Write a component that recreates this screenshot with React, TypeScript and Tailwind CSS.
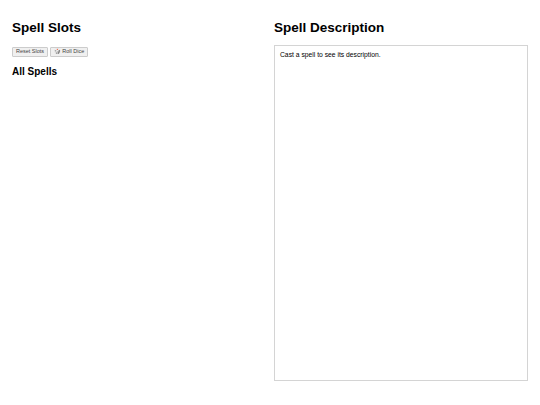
export default function App() {
  return (
    <div className="flex w-[540px] h-[405px] gap-[24px] bg-white p-3 text-black font-['Liberation_Sans',Arial,sans-serif]">
      <div className="w-[238px]">
        <h1 className="text-[13.5px] leading-[16px] font-bold mt-[8px]">Spell Slots</h1>
        <div className="mt-[11px] flex gap-[2px]">
          <button className="h-[10px] w-[36px] border border-[#ccc] bg-[#f0f0f0] rounded-[1px] text-[5.5px] leading-none text-[#444]">Reset Slots</button>
          <button className="h-[10px] w-[38px] border border-[#ccc] bg-[#f0f0f0] rounded-[1px] text-[5.5px] leading-none text-[#444]">🎲 Roll Dice</button>
        </div>
        <h2 className="text-[10px] leading-[12px] font-bold mt-[9px]">All Spells</h2>
      </div>
      <div className="flex-1 flex flex-col">
        <h1 className="text-[13.5px] leading-[16px] font-bold mt-[8px]">Spell Description</h1>
        <div className="mt-[9px] h-[336px] border border-[#d4d4d4] p-[5px] text-[6.75px] leading-[8px]">
          Cast a spell to see its description.
        </div>
      </div>
    </div>
  );
}
